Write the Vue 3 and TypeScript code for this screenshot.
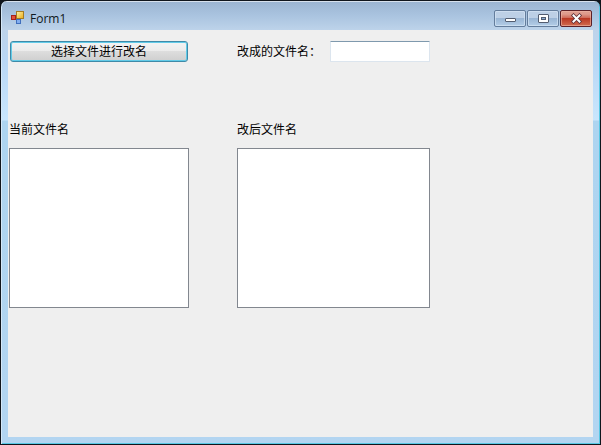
<script setup lang="ts">
import { ref } from 'vue'

const newName = ref('')
const currentNames = ref<string[]>([])
const renamedNames = ref<string[]>([])
</script>

<template>
  <main class="window">
    <header class="titlebar">
      <svg class="app-icon" viewBox="0 0 16 16" aria-hidden="true">
        <defs>
          <linearGradient id="gold" x1="0" y1="0" x2="1" y2="1">
            <stop offset="0" stop-color="#fff3a6" />
            <stop offset="1" stop-color="#e9ab18" />
          </linearGradient>
        </defs>
        <rect x="6.5" y="1.5" width="7" height="7" fill="url(#gold)" stroke="#a57b22" />
        <rect x="1.5" y="5.5" width="4" height="4" fill="#e0523a" stroke="#a5201b" />
        <rect x="6.5" y="9.5" width="4" height="4" fill="#82aef0" stroke="#406fbd" />
      </svg>
      <h1 class="title">Form1</h1>
      <div class="controls">
        <button type="button" class="control" aria-label="Minimize">
          <svg viewBox="0 0 15 11" aria-hidden="true">
            <rect x="2.5" y="5.5" width="10" height="3" rx="0.5" fill="#fff" stroke="#535d70" />
          </svg>
        </button>
        <button type="button" class="control" aria-label="Maximize">
          <svg viewBox="0 0 15 11" aria-hidden="true">
            <rect x="2.5" y="1.5" width="10" height="8" rx="0.5" fill="#fff" stroke="#535d70" />
            <rect x="5.5" y="4.5" width="4" height="2" fill="#8cacd0" stroke="#535d70" />
          </svg>
        </button>
        <button type="button" class="control close" aria-label="Close">
          <svg viewBox="0 0 15 11" aria-hidden="true">
            <path d="M4.5 2.5 10.5 8.5M10.5 2.5 4.5 8.5" fill="none" stroke="#5e3038" stroke-width="3.6" stroke-linecap="square" />
            <path d="M4.5 2.5 10.5 8.5M10.5 2.5 4.5 8.5" fill="none" stroke="#fff" stroke-width="2" stroke-linecap="square" />
          </svg>
        </button>
      </div>
    </header>

    <form class="client" @submit.prevent>
      <button type="button" class="choose">选择文件进行改名</button>
      <div class="name-row">
        <label for="new-name">改成的文件名：</label>
        <input id="new-name" v-model="newName" type="text" />
      </div>
      <div class="list">
        <label for="current-names">当前文件名</label>
        <select id="current-names" size="10">
          <option v-for="name in currentNames" :key="name">{{ name }}</option>
        </select>
      </div>
      <div class="list">
        <label for="renamed-names">改后文件名</label>
        <select id="renamed-names" size="10">
          <option v-for="name in renamedNames" :key="name">{{ name }}</option>
        </select>
      </div>
    </form>
  </main>
</template>

<style>
body {
  background: #10151c;
}
</style>

<style scoped>
.window {
  box-sizing: border-box;
  display: flex;
  flex-direction: column;
  min-height: 100vh;
  padding: 2px 7px 7px;
  border: 1px solid #10151c;
  border-radius: 7px 7px 0 0;
  background:
    linear-gradient(#ffffff99, #ffffff99) top / 100% 1px no-repeat,
    linear-gradient(#9bb4d1, #a9c3df 14px, #bdd3ea 29px, #b9d7f5 60px, #c9e6fd 119px, #add4f0 120px, #b3d5f1);
  box-shadow: inset 1px 0 #d5e8f8, inset -1px -1px #58c8e4;
  font-family: "Liberation Sans", "Noto Sans CJK SC", sans-serif;
  font-size: 12px;
  color: #000;
}

.titlebar {
  display: flex;
  align-items: center;
  height: 27px;
  padding: 0 1px 0 2px;
}

.app-icon {
  width: 16px;
  height: 16px;
  margin-top: 2px;
}

.title {
  flex: 1;
  margin: 4px 0 0 4px;
  font: 12px/16px "Open Sans", "Noto Sans", sans-serif;
  color: #101820;
}

.controls {
  display: flex;
  gap: 1px;
  padding-top: 4px;
}

.control {
  display: grid;
  place-items: center;
  width: 32px;
  height: 17px;
  padding: 0;
  border: 1px solid #647d9c;
  border-radius: 2px;
  background: linear-gradient(#bdd0e6 0 45%, #98b4d3 46%, #b3cde7);
  box-shadow: inset 0 0 0 1px #d7e5f4aa;
}

.control svg {
  width: 15px;
  height: 11px;
}

.close {
  border-color: #5c2027;
  background: linear-gradient(#df9c8e 0 20%, #cf6b5a 45%, #b83420 46%, #d16c50);
  box-shadow: inset 0 0 0 1px #efb8a799;
}

.client {
  flex: 1;
  display: grid;
  grid-template-columns: minmax(0, 180fr) minmax(0, 193fr);
  grid-template-rows: 21px auto;
  column-gap: 48px;
  row-gap: 58px;
  align-content: start;
  padding: 11px 163px 20px 1px;
  background: #efefef;
}

.choose {
  margin: 0 1px;
  padding: 0;
  border: 1px solid #3f8aa8;
  border-radius: 3px;
  background: linear-gradient(#f3f3f3, #ebebeb 48%, #dddddd 50%, #cfcfcf);
  box-shadow: inset 0 0 0 1px #62cbe8;
  font: inherit;
  line-height: 18px;
  color: #000;
}

.name-row {
  display: flex;
  align-items: center;
  justify-content: space-between;
}

.name-row label {
  line-height: 20px;
  white-space: nowrap;
}

.name-row input {
  box-sizing: border-box;
  width: 100px;
  height: 21px;
  padding: 1px 3px;
  border: 1px solid #dce5ee;
  border-top-color: #7f99ad;
  border-radius: 1px;
  background: #fff;
  font: inherit;
}

.list {
  display: flex;
  flex-direction: column;
  gap: 8px;
}

.list label {
  line-height: 20px;
}

.list select {
  box-sizing: border-box;
  width: 100%;
  height: 160px;
  padding: 1px;
  border: 1px solid #82878f;
  border-radius: 0;
  background: #fff;
  font: inherit;
}
</style>
